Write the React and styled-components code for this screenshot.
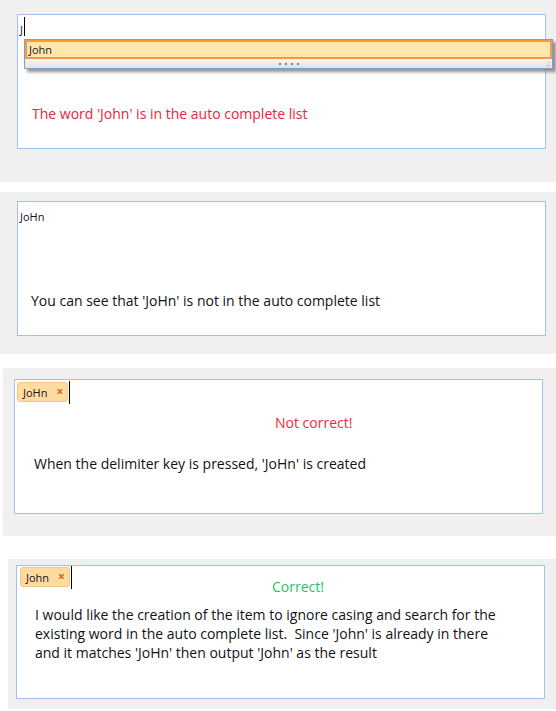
import React from "react";
import styled, { createGlobalStyle } from "styled-components";

const GlobalStyle = createGlobalStyle`
    html, body {
        margin: 0;
        padding: 0;
        background: #ffffff;
    }
    body {
        font-family: "Open Sans", "Noto Sans", sans-serif;
        color: #111118;
    }
`;

const Page = styled.div`
    width: 556px;
    display: flex;
    flex-direction: column;
`;

const Panel = styled.section`
    background: #f0f0f0;
    margin: ${(props) => props.$gap || 0}px 0 0 ${(props) => props.$indent || 0}px;
    padding: ${(props) => props.$pad};
`;

const Editor = styled.div`
    position: relative;
    box-sizing: border-box;
    height: ${(props) => props.$h || 135}px;
    background: #ffffff;
    border: 1px solid #a3c0e8;
    display: flex;
    flex-direction: column;
`;

const InputLine = styled.div`
    display: flex;
    align-items: flex-start;
    height: ${(props) => props.$h || 20}px;
    margin: ${(props) => props.$top || 0}px 0 0 ${(props) => props.$left || 0}px;
`;

const Typed = styled.span`
    font-size: 11px;
    line-height: 19px;
    padding-top: 3px;
    color: #1a1020;
`;

const Caret = styled.span`
    width: 1px;
    height: ${(props) => props.$h || 19}px;
    margin-left: ${(props) => props.$left || 1}px;
    margin-top: ${(props) => props.$top || 0}px;
    background: #000000;
`;

const Chip = styled.span`
    box-sizing: border-box;
    height: 20px;
    display: inline-flex;
    align-items: center;
    gap: 9px;
    padding: 0 4px 0 5px;
    margin-top: ${(props) => props.$top || 0}px;
    background: #ffdba0;
    border: 1px solid #f5c783;
    border-radius: 3px;
    font-size: 11px;
    color: #1a1020;
`;

const Remove = styled.span`
    font-size: 12px;
    font-weight: 700;
    line-height: 1;
    color: #cf6418;
`;

const Popup = styled.div`
    position: absolute;
    left: 6px;
    top: 24px;
    width: 529px;
    box-sizing: border-box;
    border: 1px solid #7a9fd3;
    background: #ffffff;
    box-shadow: 3px 3px 3px rgba(60, 60, 60, 0.55);
    z-index: 2;
`;

const Suggestion = styled.div`
    box-sizing: border-box;
    height: 19px;
    border: 2px solid #f29a48;
    background: #ffe6ab;
    font-size: 11px;
    line-height: 15px;
    padding-left: 2px;
    color: #1a1020;
`;

const PopupFooter = styled.div`
    position: relative;
    height: 9px;
    background: linear-gradient(#f6f6f6, #e1e1e1);
    display: flex;
    justify-content: center;
    align-items: center;
    gap: 4px;
`;

const Dot = styled.span`
    width: 2px;
    height: 2px;
    background: #6d7fa3;
`;

const Grip = styled.span`
    position: absolute;
    right: 2px;
    bottom: 1px;
    font-size: 7px;
    line-height: 7px;
    color: #5a6a88;
`;

const Note = styled.p`
    margin: ${(props) => props.$top || 0}px 0 0 ${(props) => props.$left || 0}px;
    font-size: 14px;
    line-height: 19px;
    color: ${(props) => props.$color || "#111118"};
    white-space: nowrap;
`;

function Autocomplete () {
    return (
        <Popup>
            <Suggestion>John</Suggestion>
            <PopupFooter>
                <Dot /><Dot /><Dot /><Dot />
                <Grip>.:</Grip>
            </PopupFooter>
        </Popup>
    )
}

function App () {
    return (
        <Page>
            <GlobalStyle />

            <Panel $pad="14px 10px 33px 17px">
                <Editor>
                    <InputLine $top={2} $left={2}>
                        <Typed>J</Typed>
                        <Caret />
                    </InputLine>
                    <Autocomplete />
                    <Note $top={67} $left={14} $color="#e8263c">
                        The word 'John' is in the auto complete list
                    </Note>
                </Editor>
            </Panel>

            <Panel $gap={10} $pad="9px 10px 18px 17px">
                <Editor>
                    <InputLine $top={2} $left={2}>
                        <Typed>JoHn</Typed>
                    </InputLine>
                    <Note $top={67} $left={13}>
                        You can see that 'JoHn' is not in the auto complete list
                    </Note>
                </Editor>
            </Panel>

            <Panel $gap={14} $indent={3} $pad="11px 13px 22px 11px">
                <Editor>
                    <InputLine $h={24} $left={2}>
                        <Chip $top={2}>JoHn<Remove>×</Remove></Chip>
                        <Caret $h={23} $top={1} $left={1} />
                    </InputLine>
                    <Note $top={9} $left={260} $color="#ec2a3c">
                        Not correct!
                    </Note>
                    <Note $top={22} $left={19}>
                        When the delimiter key is pressed, 'JoHn' is created
                    </Note>
                </Editor>
            </Panel>

            <Panel $gap={23} $indent={8} $pad="6px 11px 10px 8px">
                <Editor $h={134}>
                    <InputLine $h={23} $left={3}>
                        <Chip $top={1}>John<Remove>×</Remove></Chip>
                        <Caret $h={23} $left={1} />
                    </InputLine>
                    <Note $top={-12} $left={255} $color="#2bbf66">
                        Correct!
                    </Note>
                    <Note $top={9} $left={18}>
                        I would like the creation of the item to ignore casing and search for the<br />
                        existing word in the auto complete list.&nbsp; Since 'John' is already in there<br />
                        and it matches 'JoHn' then output 'John' as the result
                    </Note>
                </Editor>
            </Panel>
        </Page>
    )
}

export default App;
